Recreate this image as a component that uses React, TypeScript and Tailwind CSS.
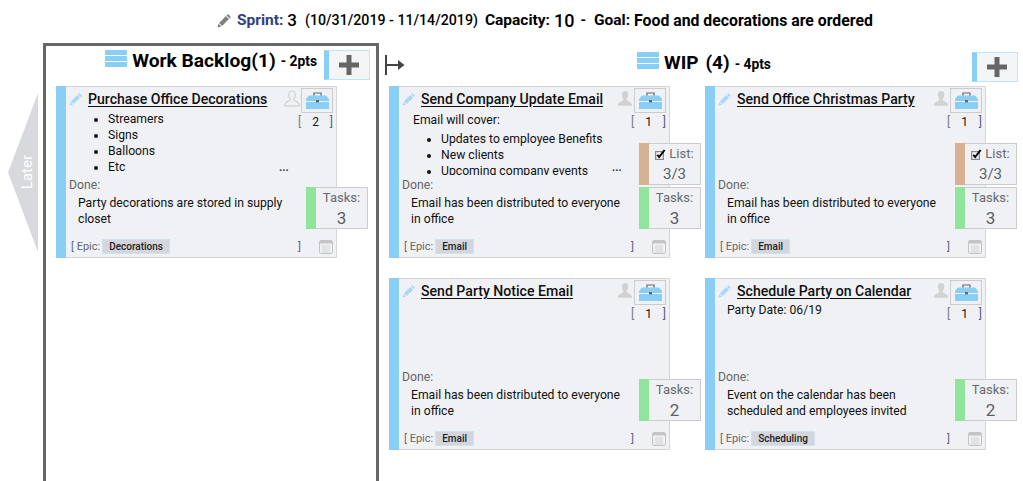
// Sprint board
import type { ReactNode } from 'react'

interface CardData {
  title: string
  points: number
  done: string[]
  epic: string
  tasks: number
  list?: string
  desc?: ReactNode
  more?: boolean
  unassigned?: boolean
}

function Pencil({ className }: { className: string }) {
  return (
    <svg viewBox="0 0 14 14" className={className} fill="currentColor">
      <path d="M0.6 13.4 L1.4 9.6 L4.4 12.6 Z" />
      <path d="M2.1 8.9 L8.9 2.1 L11.9 5.1 L5.1 11.9 Z" />
      <path d="M9.6 1.4 L10.6 0.5 Q11.1 0.1 11.6 0.5 L13.5 2.4 Q13.9 2.9 13.5 3.4 L12.6 4.4 Z" />
    </svg>
  )
}

function Bars() {
  return (
    <svg viewBox="0 0 22 17" className="w-[22px] h-[17px] shrink-0">
      <rect width="22" height="5" fill="#89cff5" />
      <rect y="6" width="22" height="5" fill="#89cff5" />
      <rect y="12" width="22" height="5" fill="#89cff5" />
    </svg>
  )
}

function UserIcon({ outline }: { outline?: boolean }) {
  return (
    <svg viewBox="0 0 16 17" className="w-[16px] h-[17px]">
      <path
        d="M8 1 C5.6 1 4.6 3 4.8 5.2 C5 7 5.6 8.2 6.4 9 C6.5 10.4 5.6 10.8 4 11.4 C2 12.2 1 13 0.8 15.8 L15.2 15.8 C15 13 14 12.2 12 11.4 C10.4 10.8 9.5 10.4 9.6 9 C10.4 8.2 11 7 11.2 5.2 C11.4 3 10.4 1 8 1 Z"
        fill={outline ? '#f0f1f5' : '#d2d2d2'}
        stroke="#d2d2d2"
        strokeWidth={outline ? 1.2 : 0}
      />
    </svg>
  )
}

function Toolbox() {
  return (
    <svg viewBox="0 0 23 17" className="w-[23px] h-[17px]">
      <path d="M8 4 V1 H15 V4" fill="none" stroke="#666" strokeWidth="1.2" />
      <path d="M3 3.5 H20 L23 7 V9 H0 V7 Z" fill="#89cff5" />
      <rect y="10" width="23" height="7" fill="#89cff5" />
      <rect x="10" y="8" width="3" height="2.4" fill="#666" />
    </svg>
  )
}

function Calendar() {
  return (
    <svg viewBox="0 0 14 14" className="w-[14px] h-[14px]">
      <rect x="0.5" y="0.5" width="13" height="13" rx="1.5" fill="#f0f1f5" stroke="#c4c4c4" />
      <rect x="1" y="1" width="12" height="2.5" fill="#c4c4c4" />
      <path d="M3 6 H11 M3 8 H11 M3 10 H11 M3 12 H11" stroke="#c8c8c8" strokeWidth="1" />
      <path d="M4 5 V12.5 M6 5 V12.5 M8 5 V12.5 M10 5 V12.5" stroke="#f0f1f5" strokeWidth="0.6" />
    </svg>
  )
}

function Check() {
  return (
    <svg viewBox="0 0 11 11" className="w-[11px] h-[11px] mr-[3px]">
      <rect y="2" width="9" height="9" fill="#8a8a8a" />
      <rect x="1.2" y="3.2" width="6.6" height="6.6" fill="#f0f1f5" />
      <path d="M2.2 5.8 L4.2 8 L9.6 1" fill="none" stroke="#000" strokeWidth="2" />
    </svg>
  )
}

function TaskBox({ value }: { value: number }) {
  return (
    <div className="flex w-[62px] h-[42px] border border-[#cccccc] bg-[#f0f1f5]">
      <div className="w-[10px] -my-px -ml-px bg-[#90e59a]" />
      <div className="flex-1 flex flex-col items-center pt-[2px]">
        <div className="text-[13px] leading-[16px] text-[#666a70]">Tasks:</div>
        <div className="text-[17px] leading-[23px] mt-[1px] text-[#5c5f66]">{value}</div>
      </div>
    </div>
  )
}

function ListBox({ value }: { value: string }) {
  return (
    <div className="flex w-[62px] h-[42px] border border-[#cccccc] bg-[#f0f1f5]">
      <div className="w-[10px] -my-px -ml-px bg-[#d6b292]" />
      <div className="flex-1 flex flex-col items-center pt-[2px]">
        <div className="flex items-center text-[13px] leading-[16px] text-[#666a70]">
          <Check />
          List:
        </div>
        <div className="text-[15px] leading-[22px] mt-[1px] text-[#5c5f66]">{value}</div>
      </div>
    </div>
  )
}

function Card({ title, points, done, epic, tasks, list, desc, more, unassigned }: CardData) {
  return (
    <div className="relative flex w-[281px] h-[172px] border border-[#d5d6da] bg-[#f0f1f5]">
      <div className="w-[10px] -my-px -ml-px bg-[#89cff5] shrink-0" />
      <div className="flex-1 flex flex-col pl-[3px] min-w-0">
        <div className="flex h-[24px] items-center">
          <Pencil className="w-[13px] h-[13px] text-[#a5dbf8] mr-[6px]" />
          <span className="text-[14.1px] leading-[18px] font-medium text-[#111] underline underline-offset-2 whitespace-nowrap">{title}</span>
        </div>
        <div className="h-[64px] mb-[2px] overflow-hidden text-[12.2px] leading-[16px] text-[#111]">{desc}</div>
        <div className="text-[12.2px] leading-[16px] text-[#666]">Done:</div>
        <div className="pl-[9px] mt-[2px] text-[12.2px] leading-[16px] text-[#111]">
          {done.map((line) => (
            <div key={line} className="whitespace-nowrap">{line}</div>
          ))}
        </div>
        <div className="mt-auto mb-[2px] flex items-center pl-[2px] text-[11px] text-[#666]">
          <span className="whitespace-nowrap">[ Epic:</span>
          <span className="ml-[2px] px-[6px] h-[15px] leading-[13px] border border-[#cfe3ef] bg-[#d3d6dc] text-[10px] font-medium text-[#222] whitespace-nowrap">{epic}</span>
          <span className="ml-auto text-[#555c85]">]</span>
          <span className="ml-[18px] mr-[3px]"><Calendar /></span>
        </div>
      </div>

      {/* user, toolbox and points */}
      <div className="absolute top-px right-[3px] flex flex-col items-end">
        <div className="flex items-start">
          <span className="mr-[1px] mt-[2px]"><UserIcon outline={unassigned} /></span>
          <div className="w-[32px] h-[25px] border border-[#cccccc] flex items-center justify-center">
            <Toolbox />
          </div>
        </div>
        <div className="w-[35px] mt-[1px] flex justify-between text-[12px] leading-[16px] text-[#111]">
          <span className="text-[#777b90]">[</span>
          <span>{points}</span>
          <span className="text-[#555c85]">]</span>
        </div>
      </div>

      {more && <span className="absolute left-[222px] top-[75px] text-[11px] leading-[12px] font-bold text-[#334]">...</span>}

      {/* checklist and task counters */}
      <div className="absolute right-[-32px] bottom-[28px] flex flex-col gap-[2px]">
        {list && <ListBox value={list} />}
        <TaskBox value={tasks} />
      </div>
    </div>
  )
}

function PlusButton() {
  return (
    <div className="w-[46px] h-[30px] border border-[#bfe4f9] border-l-[5px] border-l-[#89cff5] bg-[#f4f5f7] flex items-center justify-center">
      <svg viewBox="0 0 20 20" className="w-[20px] h-[20px]">
        <path d="M7.5 0 H12.5 V7.5 H20 V12.5 H12.5 V20 H7.5 V12.5 H0 V7.5 H7.5 Z" fill="#666" />
      </svg>
    </div>
  )
}

const emailDone = ['Email has been distributed to everyone', 'in office']

export default function App() {
  return (
    <div className="h-[481px] overflow-hidden bg-white font-['Roboto',sans-serif] text-black">
      {/* sprint summary */}
      <div className="h-[41px] mb-[2px] pl-[217px] flex items-center whitespace-nowrap font-bold text-[14px]">
        <Pencil className="w-[14px] h-[14px] text-[#808080] mr-[6px]" />
        <span className="text-[#2f3f82] text-[15.5px]">Sprint:</span>
        <span className="ml-[4px] text-[17px] font-medium">3</span>
        <span className="ml-[8px] font-medium text-[14.2px]">(10/31/2019 - 11/14/2019)</span>
        <span className="ml-[7px] text-[15.5px]">Capacity:</span>
        <span className="ml-[4px] text-[18px] font-medium">10</span>
        <span className="ml-[6px]">-</span>
        <span className="ml-[8px] text-[15.5px]">Goal:</span>
        <span className="ml-[4px] text-[15.8px]">Food and decorations are ordered</span>
      </div>

      <div className="flex items-start">
        {/* later arrow */}
        <div className="w-[43px] shrink-0 pt-[50px] pl-[8px]">
          <div className="w-[30px] h-[159px] bg-[#d8d9dc] [clip-path:polygon(100%_0,100%_100%,0_50%)] flex items-center justify-center pl-[8px]">
            <span className="text-[15px] text-white [writing-mode:vertical-rl] rotate-180">Later</span>
          </div>
        </div>

        {/* backlog */}
        <div className="w-[336px] h-[480px] shrink-0 border-[3px] border-[#666666] pl-[10px]">
          <div className="h-[40px] flex justify-end pt-[1px] pr-[6px]">
            <div className="flex items-start">
              <span className="mt-[3px]"><Bars /></span>
              <span className="ml-[5px] mt-[2px] text-[19.2px] leading-[24px] font-bold whitespace-nowrap">Work Backlog(1)</span>
              <span className="ml-[5px] mt-[5px] text-[13.8px] leading-[18px] font-bold whitespace-nowrap">- 2pts</span>
            </div>
            <div className="ml-[7px] mt-[3px]"><PlusButton /></div>
          </div>
          <Card
            title="Purchase Office Decorations"
            points={2}
            done={['Party decorations are stored in supply', 'closet']}
            epic="Decorations"
            tasks={3}
            unassigned
            more
            desc={
              <ul className="list-disc pl-[39px]">
                <li>Streamers</li>
                <li>Signs</li>
                <li>Balloons</li>
                <li>Etc</li>
              </ul>
            }
          />
        </div>

        {/* wip */}
        <div className="flex-1 min-w-0">
          <div className="h-[43px] flex items-start pt-[9px]">
            <svg viewBox="0 0 20 20" className="ml-[6px] mt-[3px] w-[20px] h-[20px] shrink-0">
              <path d="M1 0 V20" stroke="#444" strokeWidth="2" />
              <path d="M2 10 H15" stroke="#444" strokeWidth="2" />
              <path d="M13 5 L19.5 10 L13 15 Z" fill="#444" />
            </svg>
            <span className="ml-[232px]"><Bars /></span>
            <span className="ml-[5px] -mt-[1px] text-[19px] leading-[24px] font-bold whitespace-nowrap">WIP</span>
            <span className="ml-[7px] -mt-[1px] text-[19px] leading-[24px] font-bold whitespace-nowrap">(4)</span>
            <span className="ml-[5px] mt-[3px] text-[13.8px] leading-[18px] font-bold whitespace-nowrap">- 4pts</span>
            <div className="ml-auto mr-[5px]"><PlusButton /></div>
          </div>
          <div className="grid grid-cols-[281px_281px] gap-x-[35px] gap-y-[20px] pl-[10px]">
            <Card
              title="Send Company Update Email"
              points={1}
              done={emailDone}
              epic="Email"
              tasks={3}
              list="3/3"
              more
              desc={
                <div className="pl-[11px] pt-[1px]">
                  <div className="h-[19px]">Email will cover:</div>
                  <ul className="list-disc pl-[28px]">
                    <li>Updates to employee Benefits</li>
                    <li>New clients</li>
                    <li>Upcoming company events</li>
                  </ul>
                </div>
              }
            />
            <Card title="Send Office Christmas Party" points={1} done={emailDone} epic="Email" tasks={3} list="3/3" />
            <Card title="Send Party Notice Email" points={1} done={emailDone} epic="Email" tasks={2} />
            <Card
              title="Schedule Party on Calendar"
              points={1}
              done={['Event on the calendar has been', 'scheduled and employees invited']}
              epic="Scheduling"
              tasks={2}
              desc={<div className="pl-[9px] -mt-[1px]">Party Date: 06/19</div>}
            />
          </div>
        </div>
      </div>
    </div>
  )
}
